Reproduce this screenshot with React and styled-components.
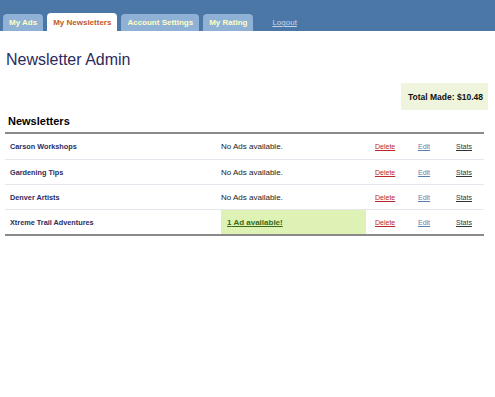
import React from 'react';
import styled, { createGlobalStyle } from 'styled-components';

const GlobalStyle = createGlobalStyle`
  body {
    margin: 0;
    background: #fff;
    font-family: "Liberation Sans", Arial, sans-serif;
  }
`;

const Header = styled.div`
  height: 31px;
  background: #4a77a6;
  display: flex;
  align-items: flex-end;
  gap: 4px;
  padding-left: 3px;
`;

const Tab = styled.a`
  box-sizing: border-box;
  height: ${(p) => (p.$active ? '18px' : '17px')};
  padding: 0 6px;
  display: flex;
  align-items: center;
  padding-top: ${(p) => (p.$active ? '1px' : '0')};
  border-radius: 4px 4px 0 0;
  background: ${(p) => (p.$active ? '#ffffff' : '#8fb1d6')};
  color: ${(p) => (p.$active ? '#c0592a' : '#ffffc4')};
  font-size: 8px;
  font-weight: bold;
  text-decoration: none;
`;

const Logout = styled.a`
  align-self: center;
  margin: 14px 0 0 15px;
  font-size: 8px;
  color: #c4d7ee;
  text-decoration: underline;
`;

const Main = styled.div`
  padding: 0 7px 0 5px;
`;

const Title = styled.h1`
  margin: 19px 0 0 1px;
  font-size: 16px;
  line-height: 20px;
  font-weight: normal;
  color: #2b2b5c;
`;

const TotalRow = styled.div`
  display: flex;
  justify-content: flex-end;
  margin-top: 13px;
`;

const TotalBox = styled.div`
  width: 87px;
  height: 27px;
  box-sizing: border-box;
  display: flex;
  align-items: center;
  padding-left: 7px;
  background: #eef5dc;
  font-size: 8.5px;
  font-weight: bold;
  color: #111;
  white-space: nowrap;
`;

const Section = styled.div`
  margin: 4px 4px 0 0;
`;

const SectionTitle = styled.h2`
  margin: 0;
  padding: 0 0 4px 3px;
  font-size: 11px;
  line-height: 14px;
  font-weight: bold;
  color: #000;
  border-bottom: 2px solid #8a8a8a;
`;

const Table = styled.div`
  border-bottom: 2px solid #8a8a8a;
`;

const Row = styled.div`
  display: grid;
  grid-template-columns: 216px 145px 43px 38px 1fr;
  height: 25px;
  box-sizing: border-box;
  border-top: ${(p) => (p.$first ? 'none' : '1px solid #e6e6ee')};
`;

const Cell = styled.div`
  display: flex;
  align-items: center;
  padding-left: ${(p) => p.$pad || 0}px;
  background: ${(p) => (p.$highlight ? '#def2b6' : 'transparent')};
`;

const Name = styled.span`
  font-size: 7.3px;
  font-weight: bold;
  color: #2c2c5e;
`;

const Status = styled.span`
  font-size: 8px;
  color: #222;
`;

const AdLink = styled.a`
  font-size: 8px;
  font-weight: bold;
  color: #3a6b12;
  text-decoration: underline;
`;

const Action = styled.a`
  font-size: 7px;
  color: ${(p) => p.$color};
  text-decoration: underline;
`;

const newsletters = [
  { name: 'Carson Workshops', ads: 0 },
  { name: 'Gardening Tips', ads: 0 },
  { name: 'Denver Artists', ads: 0 },
  { name: 'Xtreme Trail Adventures', ads: 1 },
];

const tabs = ['My Ads', 'My Newsletters', 'Account Settings', 'My Rating'];

const App = () => {
  return (
    <>
      <GlobalStyle />
      <Header>
        {tabs.map((t) => (
          <Tab key={t} $active={t === 'My Newsletters'}>{t}</Tab>
        ))}
        <Logout>Logout</Logout>
      </Header>
      <Main>
        <Title>Newsletter Admin</Title>
        <TotalRow>
          <TotalBox>Total Made: $10.48</TotalBox>
        </TotalRow>
        <Section>
          <SectionTitle>Newsletters</SectionTitle>
          <Table>
            {newsletters.map((n, i) => (
              <Row key={n.name} $first={i === 0}>
                <Cell $pad={5}><Name>{n.name}</Name></Cell>
                {n.ads > 0 ? (
                  <Cell $pad={6} $highlight><AdLink>{n.ads} Ad available!</AdLink></Cell>
                ) : (
                  <Cell><Status>No Ads available.</Status></Cell>
                )}
                <Cell $pad={9}><Action $color="#b8282a">Delete</Action></Cell>
                <Cell $pad={9}><Action $color="#5a7fb2">Edit</Action></Cell>
                <Cell $pad={9}><Action $color="#333">Stats</Action></Cell>
              </Row>
            ))}
          </Table>
        </Section>
      </Main>
    </>
  );
};

export default App;
